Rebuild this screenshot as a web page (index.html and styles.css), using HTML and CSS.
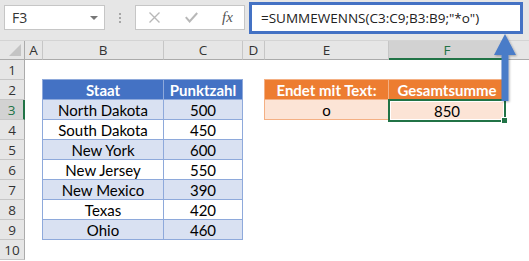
FILE: index.html
```html
<!DOCTYPE html>
<html lang="de">
<head>
    <meta charset="UTF-8">
    <meta name="viewport" content="width=device-width, initial-scale=1.0">
    <title>SUMMEWENNS endet mit Text</title>
    <link rel="stylesheet" href="styles.css">
</head>
<body>
<div class="toolbar">
    <div class="namebox">
        <span>F3</span>
        <span class="caret"></span>
    </div>
    <div class="dots"><i></i><i></i><i></i></div>
    <div class="fxbox">
        <svg class="cancel" width="13" height="11" viewBox="0 0 13 11">
            <path d="M1.5 0.5 L11.5 10.5 M11.5 0.5 L1.5 10.5" stroke="#b8b8b8" stroke-width="1.4" fill="none"/>
        </svg>
        <svg class="enter" width="13" height="11" viewBox="0 0 13 11">
            <path d="M0.8 5.2 L4.6 9.4 L12.2 1" stroke="#b8b8b8" stroke-width="2" fill="none"/>
        </svg>
        <span class="fx">fx</span>
    </div>
    <div class="formula">=SUMMEWENNS(C3:C9;B3:B9;"*o")</div>
</div>

<div class="sheet">
    <div class="corner"></div>
    <div class="colhead">A</div>
    <div class="colhead">B</div>
    <div class="colhead">C</div>
    <div class="colhead">D</div>
    <div class="colhead">E</div>
    <div class="colhead active">F</div>
    <div class="colhead last"></div>

    <div class="rowhead r1">1</div>
    <div class="rowhead r2">2</div>
    <div class="rowhead r3 active">3</div>
    <div class="rowhead r4">4</div>
    <div class="rowhead r5">5</div>
    <div class="rowhead r6">6</div>
    <div class="rowhead r7">7</div>
    <div class="rowhead r8">8</div>
    <div class="rowhead r9">9</div>
    <div class="rowhead r10">10</div>

    <div class="tbl blue">
        <div class="th">Staat</div><div class="th">Punktzahl</div>
        <div class="td">North Dakota</div><div class="td">500</div>
        <div class="td">South Dakota</div><div class="td">450</div>
        <div class="td">New York</div><div class="td">600</div>
        <div class="td">New Jersey</div><div class="td">550</div>
        <div class="td">New Mexico</div><div class="td">390</div>
        <div class="td">Texas</div><div class="td">420</div>
        <div class="td">Ohio</div><div class="td">460</div>
    </div>

    <div class="tbl orange">
        <div class="th">Endet mit Text:</div><div class="th">Gesamtsumme</div>
        <div class="td">o</div><div class="td selected">850<span class="handle"></span></div>
    </div>
</div>

<svg class="arrow" width="26" height="72" viewBox="0 0 26 72">
    <defs>
        <filter id="shade" x="-50%" y="-20%" width="200%" height="140%">
            <feDropShadow dx="1" dy="1" stdDeviation="1" flood-color="#000" flood-opacity="0.3"/>
        </filter>
    </defs>
    <path d="M11 2 L22 23 L14.5 23 L14.5 69 L7.5 69 L7.5 23 L0 23 Z" fill="#4a7bc8" filter="url(#shade)"/>
</svg>
</body>
</html>
```

FILE: styles.css
```css
body {
    margin: 0;
    width: 529px;
    height: 261px;
    overflow: hidden;
    background: #fff;
    font-family: "Open Sans", "Noto Sans", sans-serif;
    position: relative;
}

/* formula bar */
.toolbar {
    height: 41px;
    background: #e6e6e6;
    display: flex;
    align-items: flex-start;
    box-sizing: border-box;
    padding-top: 5px;
    border-bottom: 1px solid #d4d4d4;
}

.namebox {
    margin-left: 4px;
    width: 101px;
    height: 25px;
    box-sizing: border-box;
    background: #fff;
    border: 1px solid #c6c6c6;
    display: flex;
    align-items: center;
    justify-content: space-between;
    padding: 0 6px 0 7px;
    font-size: 14px;
    color: #333;
}

.caret {
    width: 0;
    height: 0;
    border-left: 4px solid transparent;
    border-right: 4px solid transparent;
    border-top: 4px solid #777;
}

.dots {
    width: 30px;
    display: flex;
    flex-direction: column;
    align-items: center;
    gap: 2px;
    padding-top: 8px;
}

.dots i {
    width: 2px;
    height: 2px;
    background: #a6a6a6;
}

.fxbox {
    width: 110px;
    height: 25px;
    box-sizing: border-box;
    background: #fff;
    border: 1px solid #c6c6c6;
    display: flex;
    align-items: center;
    padding-left: 12px;
}

.cancel {
    margin-right: 24px;
}

.enter {
    margin-right: 24px;
}

.fx {
    font-family: "Liberation Serif", serif;
    font-style: italic;
    font-size: 15px;
    color: #555;
}

.formula {
    margin-left: 4px;
    margin-top: -3px;
    width: 274px;
    height: 32px;
    box-sizing: border-box;
    border: 3px solid #4472c4;
    background: #fff;
    padding-left: 9px;
    display: flex;
    align-items: center;
    font-size: 13.5px;
    color: #222;
}

/* sheet */
.sheet {
    display: grid;
    grid-template-columns: 25px 18px 121px 79px 22px 124px 117px 23px;
    grid-template-rows: 19px repeat(10, 20px);
    position: relative;
}

.corner {
    background: #e6e6e6;
    border-right: 1px solid #ababab;
    border-bottom: 1px solid #ababab;
    box-sizing: border-box;
    position: relative;
}

.corner::after {
    content: "";
    position: absolute;
    right: 3px;
    bottom: 3px;
    border-left: 12px solid transparent;
    border-bottom: 12px solid #c4c4c4;
}

.colhead {
    background: #e6e6e6;
    border-right: 1px solid #c6c6c6;
    border-bottom: 1px solid #ababab;
    box-sizing: border-box;
    display: flex;
    align-items: center;
    justify-content: center;
    font-size: 13.5px;
    color: #333;
}

.colhead.active {
    background: #d2d2d2;
    color: #217346;
    border-bottom: 2px solid #217346;
}

.colhead.last {
    border-right: none;
}

.rowhead {
    grid-column: 1;
    background: #e6e6e6;
    border-right: 1px solid #ababab;
    border-bottom: 1px solid #c6c6c6;
    box-sizing: border-box;
    display: flex;
    align-items: center;
    justify-content: center;
    font-size: 13.5px;
    color: #333;
}

.rowhead.active {
    background: #d2d2d2;
    color: #217346;
    border-right: 2px solid #217346;
}

.r1 { grid-row: 2; }
.r2 { grid-row: 3; }
.r3 { grid-row: 4; }
.r4 { grid-row: 5; }
.r5 { grid-row: 6; }
.r6 { grid-row: 7; }
.r7 { grid-row: 8; }
.r8 { grid-row: 9; }
.r9 { grid-row: 10; }
.r10 { grid-row: 11; }

/* data tables */
.tbl {
    display: grid;
    grid-auto-rows: 20px;
    box-sizing: border-box;
    font-family: "Lato", "Open Sans", sans-serif;
    font-size: 15px;
    color: #000;
}

.tbl .th,
.tbl .td {
    display: flex;
    align-items: center;
    justify-content: center;
    box-sizing: border-box;
    position: relative;
}

.tbl .th {
    font-weight: bold;
    color: #fff;
}

.blue {
    grid-column: 3 / 5;
    grid-row: 3 / 11;
    grid-template-columns: 121px 79px;
    margin-left: -1px;
    margin-top: -1px;
}

.blue .th,
.blue .td {
    border-left: 1px solid #8ea9db;
    border-top: 1px solid #8ea9db;
}

.blue .th {
    background: #4472c4;
}

.blue .td:nth-child(4n+3),
.blue .td:nth-child(4n+4) {
    background: #d9e1f2;
}

.blue .td:nth-last-child(-n+2) {
    border-bottom: 1px solid #8ea9db;
    height: 21px;
}

.blue > :nth-child(2n) {
    border-right: 1px solid #8ea9db;
    width: 80px;
}

.orange {
    grid-column: 6 / 8;
    grid-row: 3 / 5;
    grid-template-columns: 124px 117px;
    margin-left: -1px;
    margin-top: -1px;
}

.orange .th,
.orange .td {
    border-left: 1px solid #f4b084;
    border-top: 1px solid #f4b084;
}

.orange .th {
    background: #ed7d31;
}

.orange .td {
    background: #fce4d6;
    border-bottom: 1px solid #f4b084;
    height: 21px;
}

.orange .selected {
    border: none;
    outline: 2px solid #217346;
    outline-offset: -1px;
    margin-left: 1px;
    margin-top: 1px;
    box-shadow: inset 0 0 0 2px #fff;
}

.handle {
    position: absolute;
    right: -3px;
    bottom: -3px;
    width: 5px;
    height: 5px;
    background: #217346;
    border: 1px solid #fff;
}

.arrow {
    position: absolute;
    left: 494px;
    top: 32px;
}
```
